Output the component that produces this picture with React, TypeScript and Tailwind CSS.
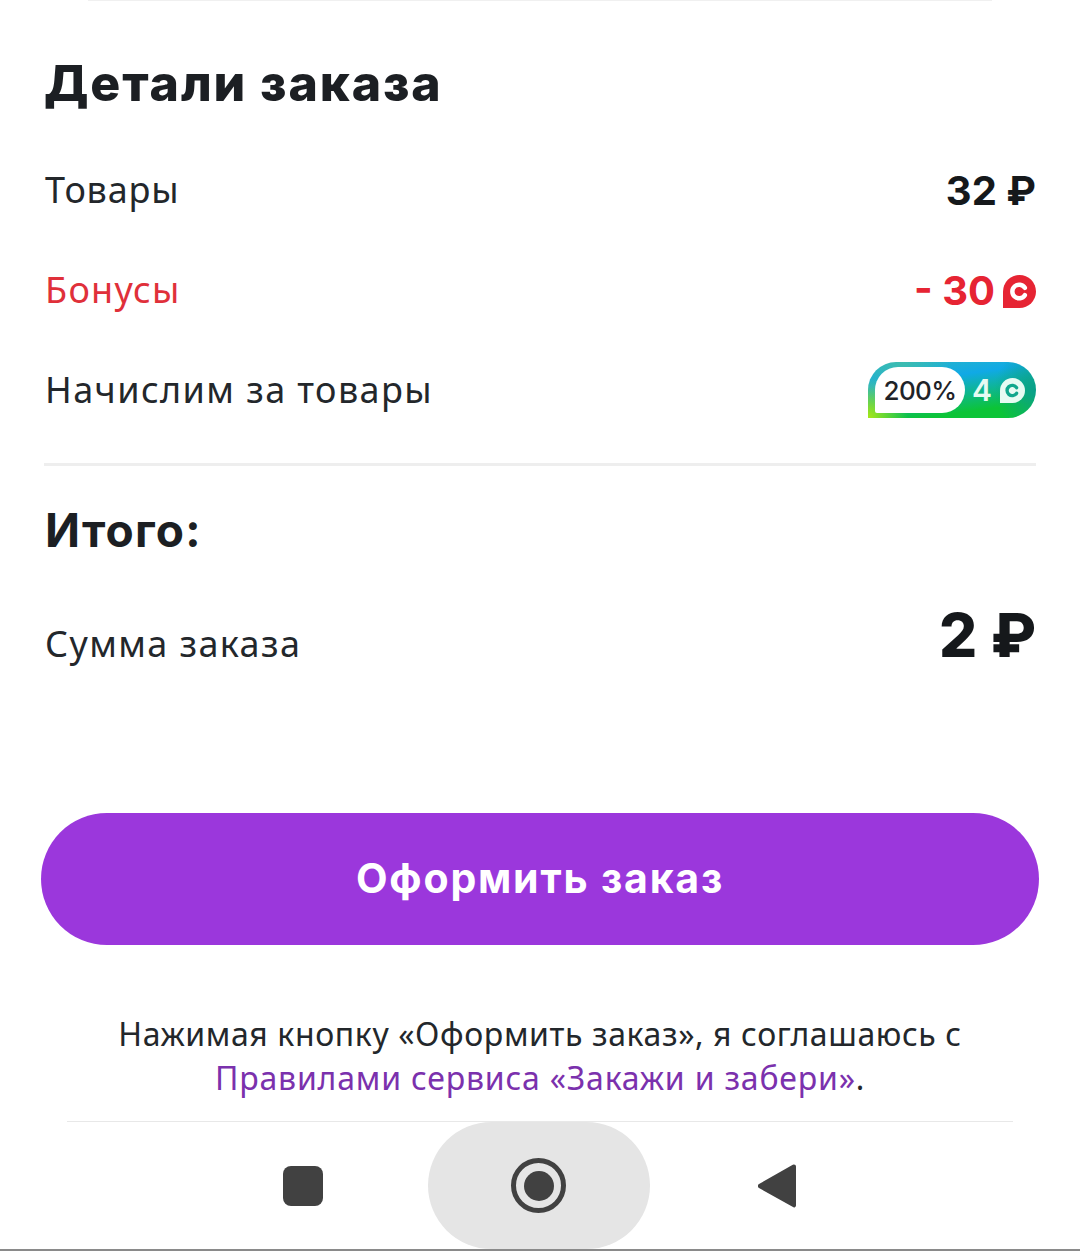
const fontBody = "font-['Noto_Sans','Open_Sans',sans-serif]";
const fontHead = "font-['Inter','Noto_Sans',sans-serif]";

function BonusMark({ className, inner }: { className?: string; inner: string }) {
  return (
    <svg viewBox="0 0 34 34" className={className}>
      <path d="M17 0a17 17 0 0 1 0 34H0V17A17 17 0 0 1 17 0z" fill="currentColor" />
      <path d="M22.5 13.2A7 7 0 1 0 22.5 20.8" fill="none" stroke={inner} strokeWidth="4.6" strokeLinecap="round" />
    </svg>
  );
}

function CashbackBadge() {
  return (
    <div className="flex h-[56px] w-[168px] items-center rounded-l-[28px] rounded-r-[28px] rounded-bl-none bg-[radial-gradient(circle_at_0%_100%,#a8e818_0,#a8e81800_40px),radial-gradient(circle_at_100%_50%,#0a9f8a_0,#0a9f8a00_42px),radial-gradient(circle_at_20%_0%,#3cbcb0_0,#3cbcb000_50px),linear-gradient(172deg,#2db7c4_0%,#10a9e6_32%,#0cc437_80%,#0cc437_100%)] pl-[7px]">
      <div className="flex h-[46px] w-[90px] items-center justify-center rounded-l-[23px] rounded-r-[23px] rounded-bl-[2px] bg-white">
        <span className={`${fontHead} text-[26px] font-medium tracking-[-0.6px] text-[#1f2328]`}>200%</span>
      </div>
      <span className={`${fontHead} ml-[7px] text-[30px] leading-none font-semibold text-[#e6fbf3]`}>4</span>
      <BonusMark className="ml-[8px] h-[25px] w-[25px] text-[#e6fbf3]" inner="#10a78d" />
    </div>
  );
}

export default function App() {
  return (
    <div className={`${fontBody} flex h-[1251px] w-[1080px] flex-col overflow-hidden bg-white text-[#1f2328]`}>
      <div className="mx-[88px] h-[1px] bg-[#f0f0f0]" />

      <div className="flex flex-col px-[44px]">
        <h1 className={`${fontHead} mt-[51px] h-[62px] text-[50px] leading-[62px] font-extrabold tracking-[1.9px] text-[#1c1f23]`}>
          Детали заказа
        </h1>

        <div className="mt-[54px] flex h-[100px] items-start justify-between pl-[1px]">
          <span className="text-[36px] leading-[44px] tracking-[0.8px] text-[#23272b]">Товары</span>
          <span className={`${fontHead} mt-[1px] text-[40px] leading-[44px] font-bold text-[#15181b]`}>32 ₽</span>
        </div>

        <div className="flex h-[100px] items-start justify-between pl-[1px]">
          <span className="text-[36px] leading-[44px] tracking-[1.3px] text-[#e0303a]">Бонусы</span>
          <span className="mt-[1px] flex items-center gap-[8px]">
            <span className={`${fontHead} text-[40px] leading-[44px] font-bold text-[#e62433]`}>- 30</span>
            <BonusMark className="h-[33px] w-[33px] text-[#e62433]" inner="#ffffff" />
          </span>
        </div>

        <div className="flex h-[95px] items-start justify-between pl-[1px]">
          <span className="text-[36px] leading-[44px] tracking-[1.4px] text-[#23272b]">Начислим за товары</span>
          <div className="-mt-[6px]">
            <CashbackBadge />
          </div>
        </div>

        <div className="h-[3px] bg-[#eeeeee]" />

        <h2 className={`${fontHead} mt-[37px] pl-[1px] text-[46px] leading-[54px] font-bold tracking-[1.2px] text-[#1c1f23]`}>Итого:</h2>

        <div className="mt-[43px] flex h-[70px] items-start justify-between pl-[1px]">
          <span className="mt-[22px] text-[36px] leading-[44px] tracking-[1.4px] text-[#23272b]">Сумма заказа</span>
          <span className={`${fontHead} text-[60px] leading-[70px] font-extrabold text-[#15181b]`}>2 ₽</span>
        </div>
      </div>

      <button
        type="button"
        className={`${fontHead} mx-[41px] mt-[143px] h-[132px] w-[998px] shrink-0 rounded-[66px] bg-[#9b37dc] text-[41px] font-bold tracking-[1.8px] text-white`}
      >
        Оформить заказ
      </button>

      <p className="mt-[67px] text-center text-[32px] leading-[44px] tracking-[0.6px] text-[#23272b]">
        Нажимая кнопку «Оформить заказ», я соглашаюсь с
        <br />
        <span className="tracking-[0.8px] text-[#7b31ad]">Правилами сервиса «Закажи и забери»</span>.
      </p>

      <div className="mx-[67px] mt-[21px] h-[1px] bg-[#e8e8e8]" />

      <nav className="flex h-[129px] items-center justify-center border-b-[2px] border-[#8a8a8a] pr-[2px]">
        <div className="h-[40px] w-[40px] rounded-[8px] bg-[#414141]" />
        <div className="mr-[108px] ml-[105px] flex h-[127px] w-[222px] items-center justify-center rounded-[64px] bg-[#e5e5e5]">
          <div className="flex h-[55px] w-[55px] items-center justify-center rounded-full border-[5px] border-[#414141]">
            <div className="h-[30px] w-[30px] rounded-full bg-[#414141]" />
          </div>
        </div>
        <svg viewBox="0 0 38 46" className="h-[46px] w-[38px] text-[#414141]">
          <path d="M36 1.500a2 2 0 0 1 2 2v39a2 2 0 0 1-3 1.600L1 25a2.400 2.400 0 0 1 0-4L34.800 1.800a2 2 0 0 1 1.200-.3z" fill="currentColor" />
        </svg>
      </nav>
    </div>
  );
}
